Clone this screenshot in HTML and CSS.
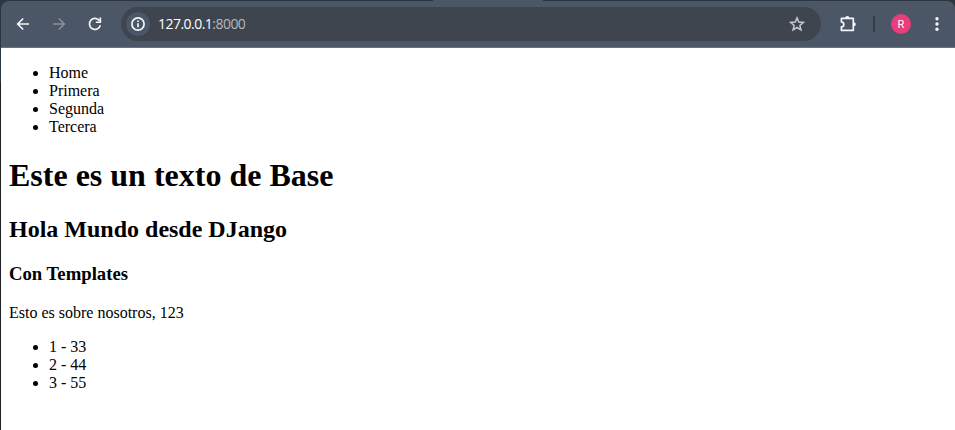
FILE: index.html
```html
<!DOCTYPE html>
<html lang="es">
<head>
<meta charset="utf-8">
<title>127.0.0.1:8000</title>
<link rel="stylesheet" href="styles.css">
</head>
<body>
<div class="window">
  <header class="frame">
    <span class="tab-foot"></span>
    <div class="toolbar">
      <nav class="nav">
        <svg class="icon" viewBox="0 0 16 16"><path d="M14 8H3M8.2 2.5 2.7 8l5.5 5.5"/></svg>
        <svg class="icon muted" viewBox="0 0 16 16"><path d="M2 8h11M7.8 2.5 13.3 8l-5.5 5.5"/></svg>
        <svg class="icon" viewBox="0 0 16 16"><path d="M13.3 9.2A5.5 5.5 0 1 1 12.6 5"/><path class="solid" d="M14.2 1.6V7H8.8V5.4h3.7V1.6z"/></svg>
      </nav>
      <div class="omnibox">
        <span class="site-info"><svg class="icon" viewBox="0 0 16 16"><circle cx="8" cy="8" r="6.1"/><path d="M8 7.2v4M8 4.5v1.6"/></svg></span>
        <span class="url">127.0.0.1<span class="port">:8000</span></span>
        <svg class="icon star" viewBox="0 0 16 16"><path d="m8 1.9 1.75 4.1 4.6.4-3.5 3 1.1 4.5L8 11.5l-3.95 2.4 1.1-4.5-3.5-3 4.6-.4z"/></svg>
      </div>
      <svg class="extensions" viewBox="0 0 18 18"><path d="M2.4 3.3h11.9v12H2.4v-3.5a2.3 2.3 0 0 0 0-4.8z"/><path class="solid" d="M6.2 3a2.1 2.1 0 0 1 4.2 0zM14.7 7.2a2.1 2.1 0 0 1 0 4.2z"/></svg>
      <span class="divider"></span>
      <span class="avatar">R</span>
      <svg class="menu" viewBox="0 0 4 16"><circle cx="2" cy="2.7" r="1.7"/><circle cx="2" cy="8" r="1.7"/><circle cx="2" cy="13.3" r="1.7"/></svg>
    </div>
  </header>
  <main class="page">
    <ul>
      <li>Home</li>
      <li>Primera</li>
      <li>Segunda</li>
      <li>Tercera</li>
    </ul>
    <h1>Este es un texto de Base</h1>
    <h2>Hola Mundo desde DJango</h2>
    <h3>Con Templates</h3>
    <p>Esto es sobre nosotros, 123</p>
    <ul>
      <li>1 - 33</li>
      <li>2 - 44</li>
      <li>3 - 55</li>
    </ul>
  </main>
</div>
</body>
</html>
```

FILE: styles.css
```css
body {
  margin: 0;
  height: 430px;
  overflow: hidden;
  background: linear-gradient(#25383f 0 82px, #202124 82px);
}

.window {
  box-sizing: border-box;
  height: 430px;
  padding-left: 1px;
  display: flex;
  flex-direction: column;
}

.frame {
  position: relative;
  padding-top: 1px;
  background: #2c3540;
}

.tab-foot {
  position: absolute;
  top: 0;
  left: 432px;
  width: 110px;
  height: 1px;
  background: #4b5666;
}

.toolbar {
  box-sizing: border-box;
  height: 47px;
  display: flex;
  align-items: center;
  padding: 0 16px 0 14px;
  border-bottom: 1px solid #6b727d;
  border-radius: 8px 8px 0 0;
  background: #4b5666;
}

.nav {
  display: flex;
  gap: 20px;
  margin-right: 18px;
}

.icon {
  display: block;
  width: 16px;
  height: 16px;
  fill: none;
  stroke: #f3f5f7;
  stroke-width: 1.7;
}

.muted {
  stroke: #89919b;
}

.solid {
  fill: #f3f5f7;
  stroke: none;
}

.omnibox {
  box-sizing: border-box;
  width: 700px;
  height: 34px;
  display: flex;
  align-items: center;
  padding: 0 16px 0 5px;
  border-radius: 17px;
  background: #3e454f;
}

.site-info {
  width: 24px;
  height: 24px;
  display: grid;
  place-items: center;
  border-radius: 50%;
  background: #4b5666;
}

.url {
  flex: 1;
  margin-left: 8px;
  font: 14px/20px "Open Sans", sans-serif;
  letter-spacing: -0.53px;
  color: #fff;
}

.port {
  color: #b4b8be;
}

.star {
  stroke: #c4c7cb;
  stroke-width: 1.5;
}

.extensions {
  width: 18px;
  height: 18px;
  margin-left: 18px;
  fill: none;
  stroke: #f3f5f7;
  stroke-width: 1.7;
  stroke-linejoin: round;
}

.divider {
  width: 2px;
  height: 16px;
  margin-left: 16px;
  background: #343c48;
}

.avatar {
  width: 20px;
  height: 20px;
  margin-left: 16px;
  border-radius: 50%;
  background: #e93d7c;
  color: #fff;
  font: 11px/21px Roboto, sans-serif;
  text-align: center;
}

.menu {
  width: 4px;
  height: 16px;
  margin-left: 24px;
  fill: #f3f5f7;
}

.page {
  flex: 1;
  padding: 0 8px;
  background: #fff;
  color: #000;
  font-family: "Liberation Serif", serif;
  font-size: 16px;
}
```
